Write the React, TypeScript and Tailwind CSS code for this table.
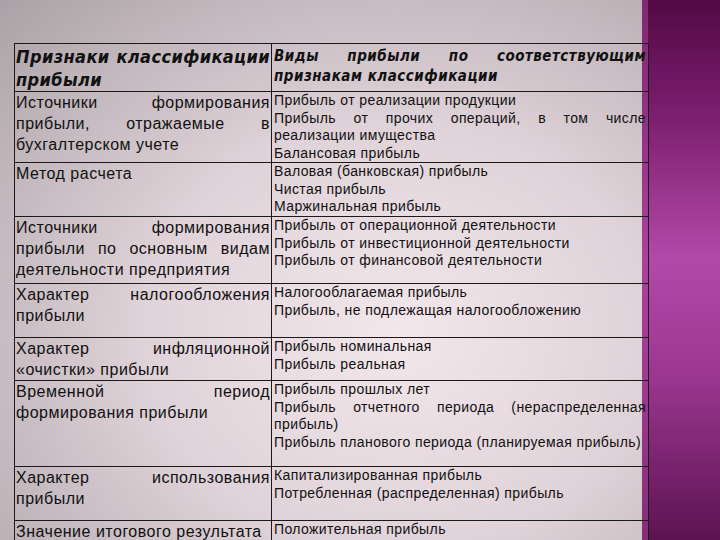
const rows: { left: string; right: string[]; h: string }[] = [
  {
    left: 'Источники формирования прибыли, отражаемые в бухгалтерском учете',
    right: [
      'Прибыль от реализации продукции',
      'Прибыль от прочих операций, в том числе реализации имущества',
      'Балансовая прибыль',
    ],
    h: 'h-[71px]',
  },
  {
    left: 'Метод расчета',
    right: ['Валовая (банковская) прибыль', 'Чистая прибыль', 'Маржинальная прибыль'],
    h: 'h-[54px]',
  },
  {
    left: 'Источники формирования прибыли по основным видам деятельности предприятия',
    right: [
      'Прибыль от операционной деятельности',
      'Прибыль от инвестиционной деятельности',
      'Прибыль от финансовой деятельности',
    ],
    h: 'h-[67px]',
  },
  {
    left: 'Характер налогообложения прибыли',
    right: ['Налогооблагаемая прибыль', 'Прибыль, не подлежащая налогообложению'],
    h: 'h-[54px]',
  },
  {
    left: 'Характер инфляционной «очистки» прибыли',
    right: ['Прибыль номинальная', 'Прибыль реальная'],
    h: 'h-[43px]',
  },
  {
    left: 'Временной период формирования прибыли',
    right: [
      'Прибыль прошлых лет',
      'Прибыль отчетного периода (нераспределенная прибыль)',
      'Прибыль планового периода (планируемая прибыль)',
    ],
    h: 'h-[86px]',
  },
  {
    left: 'Характер использования прибыли',
    right: ['Капитализированная прибыль', 'Потребленная (распределенная) прибыль'],
    h: 'h-[54px]',
  },
  {
    left: 'Значение итогового результата',
    right: ['Положительная прибыль'],
    h: 'h-[54px]',
  },
];

export default function App() {
  return (
    <div className="w-[720px] h-[540px] overflow-hidden flex">
      <div className="w-[642px] h-full shrink-0 relative z-10 bg-[radial-gradient(ellipse_at_62%_62%,#f3e7ec_0%,#dfd2d8_45%,#aaa2a6_100%)] pl-[14px] pt-[43px]">
        <table className="w-[635px] border-collapse text-[#111] table-fixed">
          <colgroup>
            <col className="w-[257px]" />
            <col />
          </colgroup>
          <tbody>
            <tr className="h-[48px]">
              <td className="border border-[#1a1a1a] align-top px-[1px] pt-[1px] font-['DejaVu_Sans_Condensed','DejaVu_Sans',sans-serif] italic font-bold text-[18px] leading-[23px] text-justify tracking-[0.4px]">
                Признаки классификации прибыли
              </td>
              <td className="border border-[#1a1a1a] align-top px-[2px] pt-[2px] font-['DejaVu_Sans_Condensed','DejaVu_Sans',sans-serif] italic font-bold text-[15px] leading-[20px] text-justify tracking-[0.5px]">
                Виды прибыли по соответствующим признакам классификации
              </td>
            </tr>
            {rows.map((r, i) => (
              <tr key={i} className={r.h}>
                <td className="border border-[#1a1a1a] align-top px-[1px] pt-0 font-['Liberation_Sans',Arial,sans-serif] text-[16px] leading-[21px] text-justify tracking-[0.5px]">
                  {r.left}
                </td>
                <td className="border border-[#1a1a1a] align-top px-[2px] pt-0 font-['Liberation_Sans',Arial,sans-serif] text-[14px] leading-[17.5px] text-justify tracking-[0.4px]">
                  {r.right.map((t, j) => (
                    <div key={j}>{t}</div>
                  ))}
                </td>
              </tr>
            ))}
          </tbody>
        </table>
      </div>
      <div className="flex-1 h-full bg-[linear-gradient(to_bottom,#520944_0%,#7d1f71_22%,#b24aa8_48%,#9a3690_70%,#5c1351_100%)] border-l-[6px] border-[#a0408f]/60" />
    </div>
  );
}
